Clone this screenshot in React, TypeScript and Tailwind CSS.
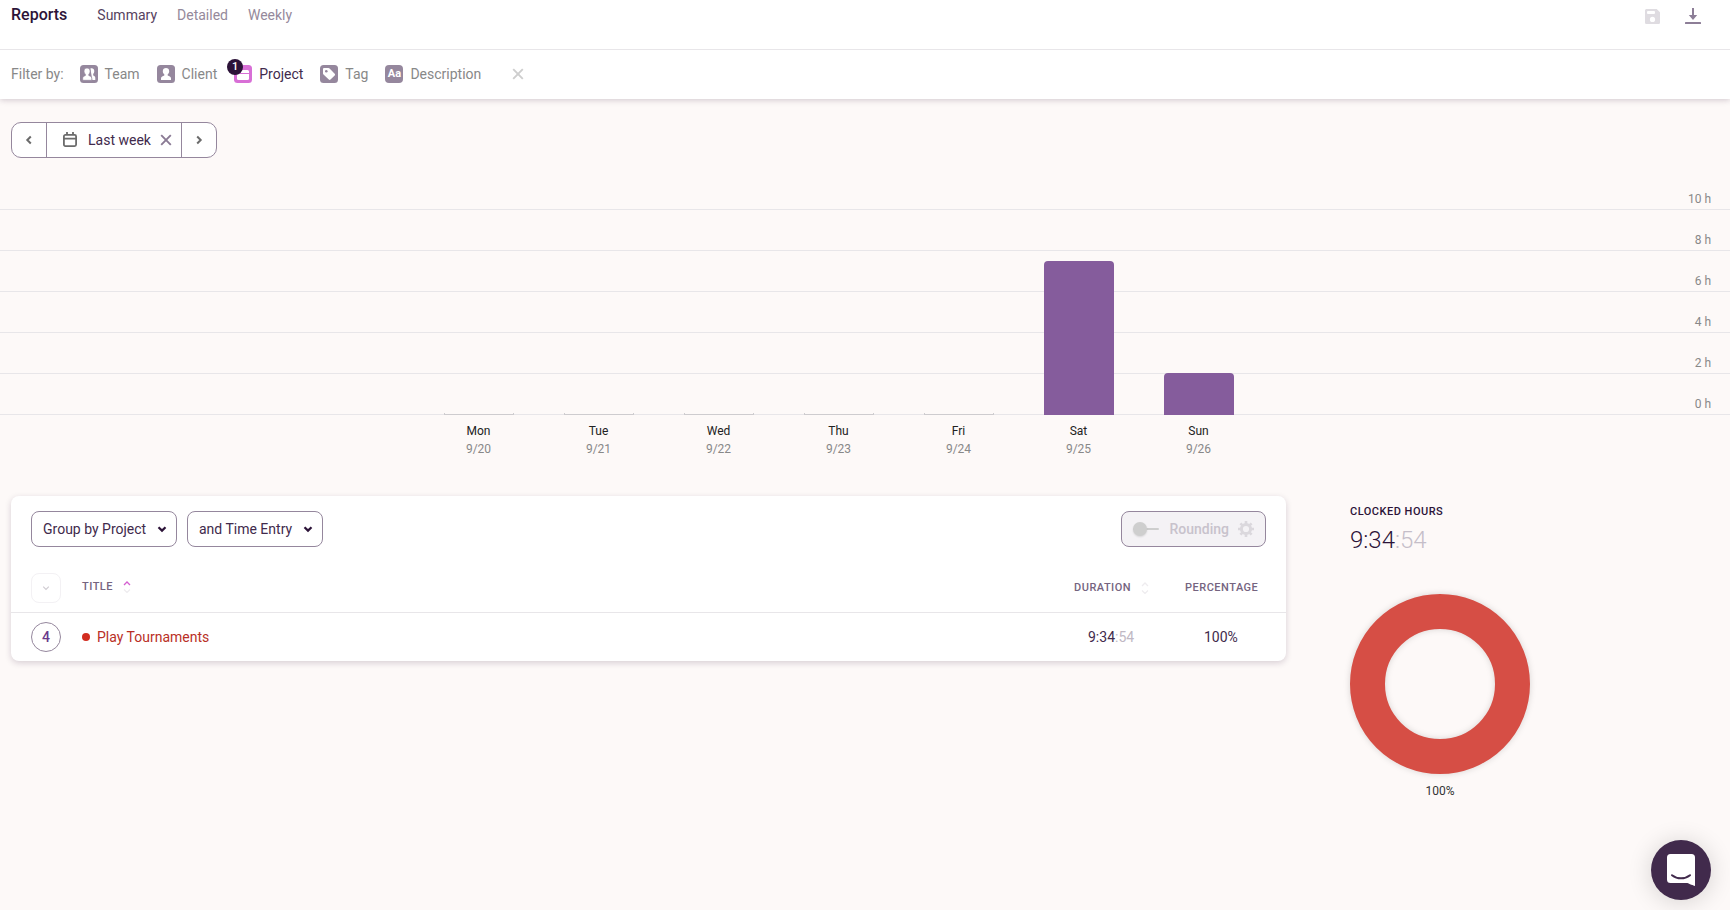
import React from "react";

const HOUR_TICKS = [10, 8, 6, 4, 2, 0];
const HOUR_HEIGHT = 20.5;

const DAYS = [
  { name: "Mon", date: "9/20", hours: 0 },
  { name: "Tue", date: "9/21", hours: 0 },
  { name: "Wed", date: "9/22", hours: 0 },
  { name: "Thu", date: "9/23", hours: 0 },
  { name: "Fri", date: "9/24", hours: 0 },
  { name: "Sat", date: "9/25", hours: 7.5 },
  { name: "Sun", date: "9/26", hours: 2.05 },
];

function Tile({ children, className }: { children: React.ReactNode; className: string }) {
  return (
    <svg width="18" height="18" viewBox="0 0 18 18" className={className} aria-hidden="true">
      <rect width="18" height="18" rx="3.5" fill="currentColor" />
      {children}
    </svg>
  );
}

function TeamIcon() {
  return (
    <Tile className="text-[#95879d]">
      <path
        d="M10.400 3.400c2-.8 3.900.4 3.900 2.700 0 1.300-.4 2.300-1.100 3v1.300c1 .5 2.100.9 2.100 2.400V15h-3"
        fill="#fff"
      />
      <path
        d="M7 3c1.800 0 3.100 1.200 3.100 3.200 0 1.400-.5 2.500-1.300 3.100v1.200c1.300.6 3 1 3 2.700V15.300H2.700v-2.100c0-1.700 1.500-2.100 2.700-2.700V9.300C4.600 8.700 4 7.600 4 6.200 4 4.200 5.200 3 7 3z"
        fill="#fff"
        stroke="currentColor"
        strokeWidth=".7"
      />
    </Tile>
  );
}

function ClientIcon() {
  return (
    <Tile className="text-[#95879d]">
      <path
        d="M9 3c1.900 0 3.200 1.200 3.200 3.200 0 1.400-.6 2.500-1.500 3.100v1.200c1.400.6 3.300 1 3.300 2.700V15H4v-1.800c0-1.700 1.900-2.100 3.300-2.700V9.300c-.9-.6-1.500-1.700-1.500-3.100C5.800 4.200 7.100 3 9 3z"
        fill="#fff"
      />
    </Tile>
  );
}

function ProjectIcon() {
  return (
    <Tile className="text-[#d86fd6]">
      <path d="M3 6.500a1.500 1.500 0 0 1 1.500-1.500h9A1.500 1.500 0 0 1 15 6.500V8H3z" fill="#fff" />
      <path d="M3 9h12v4.500a1.500 1.500 0 0 1-1.500 1.500h-9A1.500 1.500 0 0 1 3 13.500z" fill="#fff" />
    </Tile>
  );
}

function TagIcon() {
  return (
    <Tile className="text-[#95879d]">
      <path
        d="M4.200 3h4.300c.4 0 .8.200 1.100.500l5.100 5.200c.5.500.5 1.200 0 1.700l-4.200 4.200c-.5.500-1.200.500-1.700 0L3.500 9.500C3.200 9.200 3 8.800 3 8.400V4.200C3 3.500 3.500 3 4.200 3z"
        fill="#fff"
      />
      <circle cx="6.300" cy="6.300" r="1.300" fill="currentColor" />
    </Tile>
  );
}

function DescriptionIcon() {
  return (
    <span
      aria-hidden="true"
      className="flex size-[18px] items-center justify-center rounded-[4px] bg-[#95879d] text-[11px] font-bold leading-none text-white"
    >
      Aa
    </span>
  );
}

function Cross({ className }: { className: string }) {
  return (
    <svg width="12" height="12" viewBox="0 0 12 12" className={className} aria-hidden="true">
      <path d="M1.200 1.200l9.600 9.600M10.800 1.200l-9.600 9.600" stroke="currentColor" strokeWidth="1.900" />
    </svg>
  );
}

function Caret({ d, className, width = 2 }: { d: string; className: string; width?: number }) {
  return (
    <svg viewBox="0 0 10 10" className={className} fill="none" aria-hidden="true">
      <path d={d} stroke="currentColor" strokeWidth={width} />
    </svg>
  );
}

function SortArrows({ up }: { up: string }) {
  return (
    <svg width="8" height="12" viewBox="0 0 8 12" fill="none" aria-hidden="true">
      <path d="M1 4l3-3 3 3" stroke={up} strokeWidth="1.300" />
      <path d="M1 8.500l3 3 3-3" stroke="#eeecef" strokeWidth="1.200" />
    </svg>
  );
}

function Filter({ icon, label, active, badge }: { icon: React.ReactNode; label: string; active?: boolean; badge?: number }) {
  return (
    <button type="button" className="flex items-center gap-[7px]">
      <span className="relative block">
        {icon}
        {badge !== undefined && (
          <span className="absolute -left-[7px] -top-[6px] flex size-4 items-center justify-center rounded-full bg-[#2c1338] text-[11px] font-medium leading-none text-white">
            {badge}
          </span>
        )}
      </span>
      <span className={active ? "text-[#412a4c]" : "text-[#888888]"}>{label}</span>
    </button>
  );
}

function Group({ label, option }: { label: string; option: string }) {
  return (
    <span className="relative flex">
      <select
        aria-label={label}
        className="h-9 appearance-none rounded-lg border border-[#95879d] bg-white pl-[11px] pr-[29px] text-[14px] text-[#412a4c]"
      >
        <option>{option}</option>
      </select>
      <Caret
        d="M1.500 3.200L5 6.600l3.500-3.400"
        width={2.2}
        className="pointer-events-none absolute right-[10px] top-[13px] size-[10px] text-[#2c1338]"
      />
    </span>
  );
}

function Chart() {
  return (
    <section aria-label="Hours per day" className="relative mt-[11px]">
      <div>
        {HOUR_TICKS.map((h) => (
          <div
            key={h}
            className="flex h-[41px] items-end justify-end border-b border-[#e8e6e9] pb-[1px] pr-[19px] text-[12px] leading-[18px] text-[#888888]"
          >
            {h} h
          </div>
        ))}
      </div>
      <div className="absolute inset-x-0 bottom-0 flex items-end justify-center pr-[53px]">
        {DAYS.map((d) => (
          <div key={d.name} className="flex w-[120px] justify-center">
            {d.hours > 0 ? (
              <div className="w-[70px] rounded-t-[4px] bg-[#855c9c]" style={{ height: Math.round(d.hours * HOUR_HEIGHT) }} />
            ) : (
              <div className="h-[2px] w-[70px] border-x border-b border-[#cecccf]" />
            )}
          </div>
        ))}
      </div>
    </section>
  );
}

export default function App() {
  return (
    <div className="relative min-h-screen bg-[#fdf9f8] font-[Roboto,sans-serif] text-[14px] leading-5 text-[#2c1338]">
      <div className="bg-white shadow-[0_1px_6px_rgba(44,19,56,0.22)]">
        <header className="flex h-[50px] items-start border-b border-[#e8e6e9] pl-[11px] pr-[29px] pt-[5px]">
          <h1 className="mr-[30px] text-[16px] font-medium leading-5">Reports</h1>
          <nav className="flex flex-1 gap-5">
            <a href="#summary" className="text-[#564260]">Summary</a>
            <a href="#detailed" className="text-[#95899b]">Detailed</a>
            <a href="#weekly" className="text-[#95899b]">Weekly</a>
          </nav>
          <div className="flex items-center gap-[25px] pt-[3px]">
            <button type="button" aria-label="Save report" disabled>
              <svg width="15" height="16" viewBox="0 0 15 16" aria-hidden="true">
                <path
                  fillRule="evenodd"
                  fill="#dfdce1"
                  d="M1.700 1h10L15 4.200v10.200c0 .9-.7 1.600-1.600 1.600H1.700C.7 16 0 15.300 0 14.400V2.600C0 1.700.7 1 1.700 1zM3 3a1 1 0 0 0-1 1v1a1 1 0 0 0 1 1h6a1 1 0 0 0 1-1V4a1 1 0 0 0-1-1zM7.500 8.800a2.600 2.600 0 1 0 0 5.200 2.600 2.600 0 0 0 0-5.200z"
                />
              </svg>
            </button>
            <button type="button" aria-label="Download report">
              <svg width="16" height="16" viewBox="0 0 16 16" aria-hidden="true" fill="#8d7e97">
                <path d="M7 0h2v7h3.200L8 12 3.800 7H7z" />
                <rect y="14" width="16" height="2" rx=".5" />
              </svg>
            </button>
          </div>
        </header>
        <div className="flex h-[49px] items-center gap-[17px] pb-[2px] pl-[11px]">
          <span className="-mr-px text-[#888888]">Filter by:</span>
          <Filter icon={<TeamIcon />} label="Team" />
          <Filter icon={<ClientIcon />} label="Client" />
          <Filter icon={<ProjectIcon />} label="Project" active badge={1} />
          <Filter icon={<TagIcon />} label="Tag" />
          <Filter icon={<DescriptionIcon />} label="Description" />
          <button type="button" aria-label="Clear filters" className="ml-[14px]">
            <Cross className="text-[#cecece]" />
          </button>
        </div>
      </div>

      <div className="pl-[11px] pt-[23px]">
        <div className="inline-flex h-9 items-stretch divide-x divide-[#95879d] rounded-[10px] border border-[#95879d] bg-white align-top">
          <button type="button" aria-label="Previous week" className="flex w-[35px] items-center justify-center">
            <Caret d="M6.800 1.500L3.300 5l3.500 3.500" className="size-[10px] text-[#6b6b6b]" />
          </button>
          <div className="flex items-center gap-[9px] pl-4 pr-[9px]">
            <button type="button" className="flex items-center gap-[11px] text-[#412a4c]">
              <svg width="14" height="16" viewBox="0 0 14 16" fill="none" aria-hidden="true" stroke="#6b6b6b" strokeWidth="1.800">
                <rect x=".9" y="2.900" width="12.200" height="11.200" rx="1.500" />
                <path d="M1 6.700h12M4 0v3M10 0v3" />
              </svg>
              Last week
            </button>
            <button type="button" aria-label="Clear date range">
              <Cross className="text-[#8a7a94]" />
            </button>
          </div>
          <button type="button" aria-label="Next week" className="flex w-[34px] items-center justify-center">
            <Caret d="M3.200 1.500L6.700 5 3.200 8.500" className="size-[10px] text-[#6b6b6b]" />
          </button>
        </div>
      </div>

      <Chart />
      <div className="flex justify-center pr-[53px] pt-[7px] text-center text-[12px] leading-[18px]">
        {DAYS.map((d) => (
          <div key={d.name} className="w-[120px]">
            <div className="text-[#222222]">{d.name}</div>
            <div className="text-[#888888]">{d.date}</div>
          </div>
        ))}
      </div>

      <main className="mt-[38px] flex items-start gap-16 pl-[11px]">
        <section className="flex-1 rounded-lg bg-white shadow-[0_2px_6px_rgba(44,19,56,0.18)]">
          <div className="flex items-center gap-[10px] px-5 pt-[15px]">
            <Group label="Group by" option="Group by Project" />
            <Group label="Then by" option="and Time Entry" />
            <div className="ml-auto flex h-9 items-center rounded-lg border border-[#95879d] bg-[#f4f2f5] pl-[11px] pr-[11px]">
              <label className="flex items-center gap-[10px] font-medium text-[#c8c2cc]">
                <span className="relative flex h-[14px] w-[26px] items-center">
                  <input type="checkbox" role="switch" disabled className="absolute inset-0 m-0 appearance-none" />
                  <span className="h-[2px] w-full rounded-full bg-[#cecece]" />
                  <span className="absolute left-0 size-[14px] rounded-full bg-[#cecece] shadow-[0_1px_2px_rgba(0,0,0,0.12)]" />
                </span>
                Rounding
              </label>
              <button type="button" aria-label="Rounding settings" disabled className="ml-[9px]">
                <svg width="16" height="16" viewBox="0 0 16 16" aria-hidden="true">
                  <circle cx="8" cy="8" r="4.600" fill="none" stroke="#dbd8dd" strokeWidth="3" />
                  <g stroke="#dbd8dd" strokeWidth="2.600">
                    <path d="M8 0v3M8 13v3M0 8h3M13 8h3M2.400 2.400l2 2M11.600 11.600l2 2M13.600 2.400l-2 2M4.400 11.600l-2 2" />
                  </g>
                </svg>
              </button>
            </div>
          </div>

          <table className="mt-[15px] w-full border-collapse">
            <thead>
              <tr className="h-[50px] border-b border-[#e8e6e9] text-[11px] tracking-[0.5px] text-[#756480]">
                <th className="w-[71px] pl-5 pt-[11px] pb-2 text-left">
                  <button
                    type="button"
                    aria-label="Expand all"
                    className="flex size-[30px] items-center justify-center rounded-lg border border-[#f3f1f4]"
                  >
                    <Caret d="M1.500 3.200L5 6.700l3.500-3.500" width={1.4} className="size-2 text-[#cfcbd1]" />
                  </button>
                </th>
                <th className="p-0 text-left font-medium">
                  <button type="button" className="flex items-center gap-[10px]">
                    TITLE <SortArrows up="#d45fd0" />
                  </button>
                </th>
                <th className="w-[111px] p-0 pt-[2px] text-left font-medium">
                  <button type="button" className="flex items-center gap-[10px]">
                    DURATION <SortArrows up="#eeecef" />
                  </button>
                </th>
                <th className="w-[101px] p-0 pt-[2px] text-left font-medium">PERCENTAGE</th>
              </tr>
            </thead>
            <tbody>
              <tr className="h-[49px]">
                <td className="p-0 pl-5">
                  <button
                    type="button"
                    aria-label="Show 4 entries"
                    className="flex size-[30px] items-center justify-center rounded-full border border-[#95879d] font-medium text-[#6a3a8c]"
                  >
                    4
                  </button>
                </td>
                <td className="p-0">
                  <span className="flex items-center gap-[7px] text-[#b92f26]">
                    <span className="size-2 rounded-full bg-[#d22d20]" />
                    Play Tournaments
                  </span>
                </td>
                <td className="p-0 pl-[14px] text-[#412a4c]">
                  9:34<span className="text-[#c0b8c4]">:54</span>
                </td>
                <td className="p-0 pl-[19px] text-[#412a4c]">100%</td>
              </tr>
            </tbody>
          </table>
        </section>

        <aside className="w-[380px] pt-2">
          <h2 className="text-[11px] font-medium leading-4 tracking-[0.5px]">CLOCKED HOURS</h2>
          <p className="mt-[6px] text-[24px] font-light leading-7">
            9:34<span className="text-[#c5bec9]">:54</span>
          </p>
          <figure className="mt-10 w-[180px]">
            <svg viewBox="0 0 180 180" className="block w-full overflow-visible drop-shadow-[0_0_3px_rgba(0,0,0,0.15)]" role="img" aria-label="Share by project">
              <circle cx="90" cy="90" r="72.500" fill="none" stroke="#d64e45" strokeWidth="35" />
            </svg>
            <figcaption className="mt-2 text-center text-[12px] leading-[18px] text-[#333333]">100%</figcaption>
          </figure>
        </aside>
      </main>

      <button
        type="button"
        aria-label="Open chat"
        className="fixed bottom-[10px] right-[19px] flex size-[60px] items-center justify-center rounded-full bg-[#412a4c] shadow-[0_2px_24px_rgba(0,0,0,0.16)]"
      >
        <svg width="28" height="32" viewBox="0 0 28 32" aria-hidden="true">
          <path d="M3.500 0h21A3.500 3.500 0 0 1 28 3.500V32s-4.200-1.400-7.600-3H3.500A3.500 3.500 0 0 1 0 25.500v-22A3.500 3.500 0 0 1 3.500 0z" fill="#fff" />
          <path d="M5 21.200c5.500 4.200 12.500 4.200 18 0" fill="none" stroke="#412a4c" strokeWidth="2" strokeLinecap="round" />
        </svg>
      </button>
    </div>
  );
}
